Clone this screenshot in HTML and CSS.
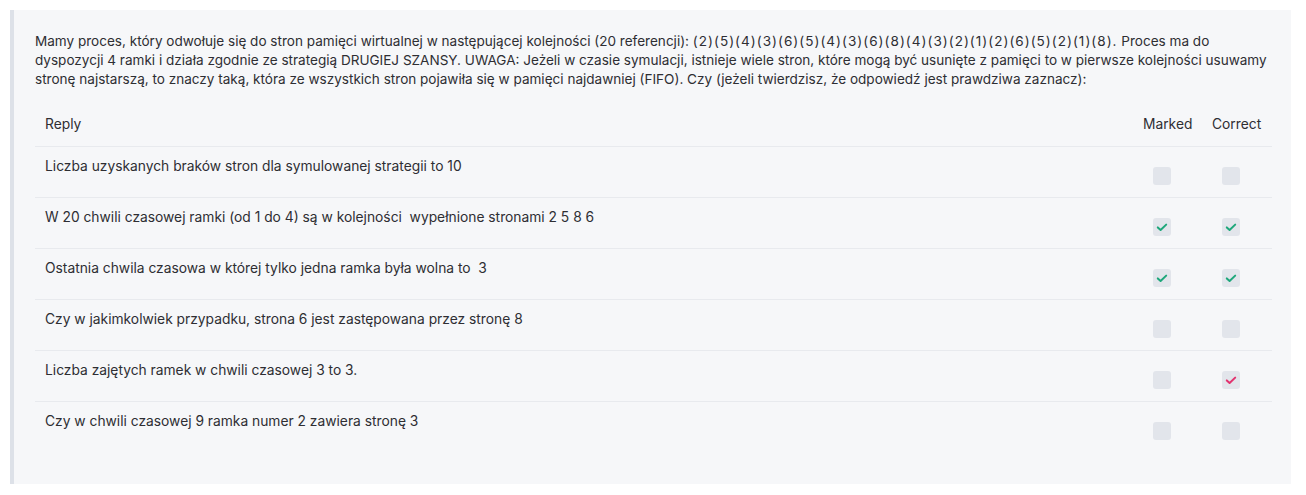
FILE: index.html
```html
<!DOCTYPE html>
<html lang="pl">
<head>
<meta charset="utf-8">
<title>Pytanie</title>
<link rel="stylesheet" href="styles.css">
</head>
<body>
<div class="panel">
  <p class="question">Mamy proces, który odwołuje się do stron pamięci wirtualnej w następującej kolejności (20 referencji): <span class="seq">(2)(5)(4)(3)(6)(5)(4)(3)(6)(8)(4)(3)(2)(1)(2)(6)(5)(2)(1)(8).</span> Proces ma do dyspozycji 4 ramki i działa zgodnie ze strategią DRUGIEJ SZANSY. UWAGA: Jeżeli w czasie symulacji, istnieje wiele stron, które mogą być usunięte z pamięci to w pierwsze kolejności usuwamy stronę najstarszą, to znaczy taką, która ze wszystkich stron pojawiła się w pamięci najdawniej (FIFO). Czy (jeżeli twierdzisz, że odpowiedź jest prawdziwa zaznacz):</p>
  <div class="table">
    <div class="row head">
      <div class="cell reply">Reply</div>
      <div class="cell col">Marked</div>
      <div class="cell col">Correct</div>
    </div>
    <div class="row">
      <div class="cell reply">Liczba uzyskanych braków stron dla symulowanej strategii to 10</div>
      <div class="cell col"><span class="box"></span></div>
      <div class="cell col"><span class="box"></span></div>
    </div>
    <div class="row">
      <div class="cell reply">W 20 chwili czasowej ramki (od 1 do 4) są w kolejności&nbsp; wypełnione stronami 2 5 8 6</div>
      <div class="cell col"><span class="box"><svg class="ok" viewBox="0 0 18 18"><path d="M4.8 9.4 L7.6 12 L13.2 6.6"/></svg></span></div>
      <div class="cell col"><span class="box"><svg class="ok" viewBox="0 0 18 18"><path d="M4.8 9.4 L7.6 12 L13.2 6.6"/></svg></span></div>
    </div>
    <div class="row">
      <div class="cell reply">Ostatnia chwila czasowa w której tylko jedna ramka była wolna to&nbsp; 3</div>
      <div class="cell col"><span class="box"><svg class="ok" viewBox="0 0 18 18"><path d="M4.8 9.4 L7.6 12 L13.2 6.6"/></svg></span></div>
      <div class="cell col"><span class="box"><svg class="ok" viewBox="0 0 18 18"><path d="M4.8 9.4 L7.6 12 L13.2 6.6"/></svg></span></div>
    </div>
    <div class="row">
      <div class="cell reply">Czy w jakimkolwiek przypadku, strona 6 jest zastępowana przez stronę 8</div>
      <div class="cell col"><span class="box"></span></div>
      <div class="cell col"><span class="box"></span></div>
    </div>
    <div class="row">
      <div class="cell reply">Liczba zajętych ramek w chwili czasowej 3 to 3.</div>
      <div class="cell col"><span class="box"></span></div>
      <div class="cell col"><span class="box"><svg class="bad" viewBox="0 0 18 18"><path d="M4.8 9.4 L7.6 12 L13.2 6.6"/></svg></span></div>
    </div>
    <div class="row last">
      <div class="cell reply">Czy w chwili czasowej 9 ramka numer 2 zawiera stronę 3</div>
      <div class="cell col"><span class="box"></span></div>
      <div class="cell col"><span class="box"></span></div>
    </div>
  </div>
</div>
</body>
</html>
```
FILE: styles.css
```css
html, body {
  margin: 0;
  padding: 0;
  background: #ffffff;
}
body {
  font-family: Inter, "Noto Sans", "Liberation Sans", sans-serif;
  font-size: 13.8px;
  line-height: 19px;
  color: #2e2e33;
}
.panel {
  margin: 10px 15px 0 10px;
  height: 474px;
  box-sizing: border-box;
  border-left: 4px solid #dde1e8;
  background: #f6f7f9;
  padding: 21px 19px 0 21px;
}
.question {
  margin: 0;
  padding-top: 1px;
  font-size: 13.55px;
}
.seq {
  letter-spacing: 1px;
}
.table {
  margin-top: 13px;
}
.row {
  display: grid;
  grid-template-columns: 1fr 69px 70px;
  height: 51px;
  box-sizing: border-box;
  border-bottom: 1px solid #e8eaee;
}
.row.head {
  height: 45px;
}
.row.last {
  border-bottom: none;
}
.cell {
  padding: 10px 10px 0 10px;
  white-space: nowrap;
}
.head .cell {
  padding-top: 13px;
}
.row:not(.head) .col {
  padding: 20px 0 0 20px;
}
.box {
  display: block;
  width: 18px;
  height: 18px;
  border-radius: 3px;
  background: #e2e5eb;
}
.box svg {
  display: block;
  width: 18px;
  height: 18px;
  fill: none;
  stroke-width: 2;
  stroke-linecap: round;
  stroke-linejoin: round;
}
.ok { stroke: #1ea77b; }
.bad { stroke: #e2336f; }
```
